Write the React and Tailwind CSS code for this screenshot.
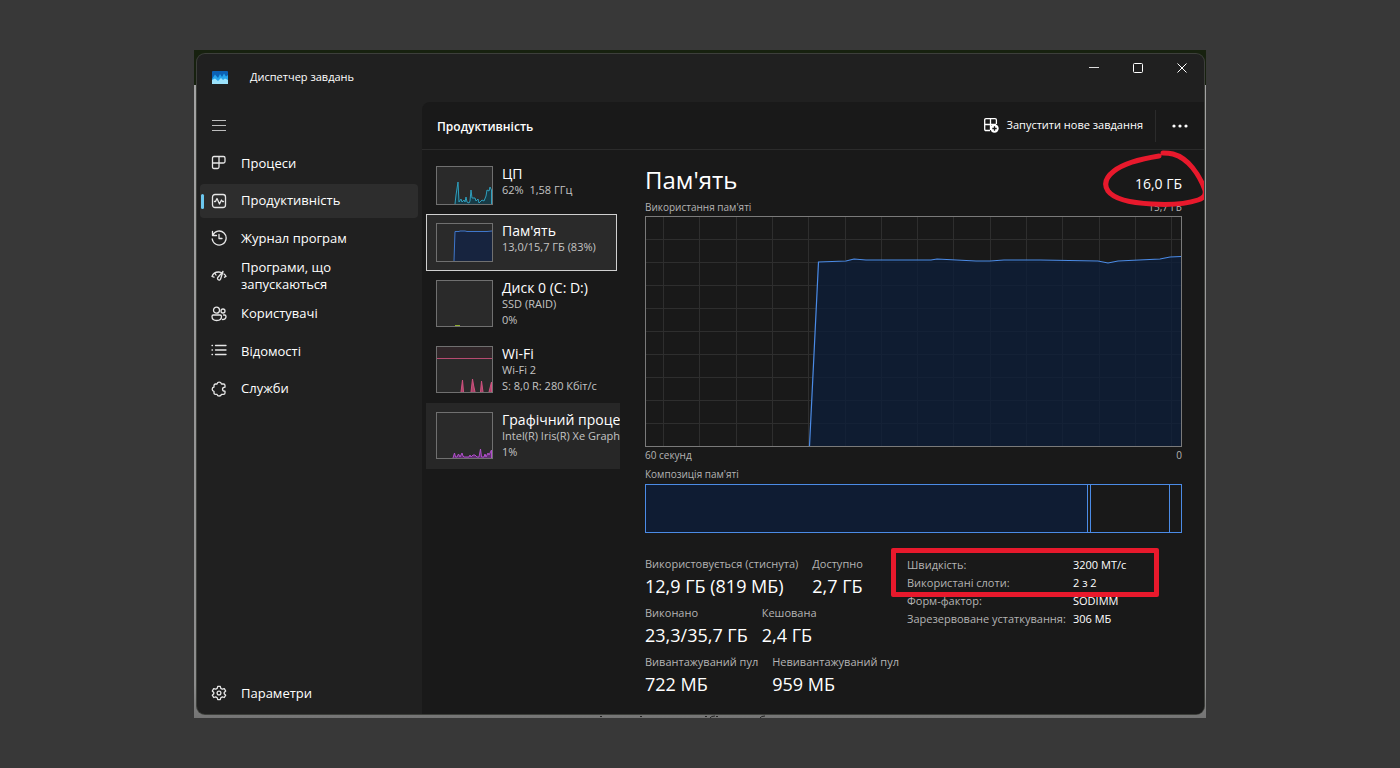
import React from 'react';

const NAV_ITEMS = [
  { id: 'processes', label: 'Процеси', icon: ProcessesIcon },
  { id: 'performance', label: 'Продуктивність', icon: PerformanceIcon },
  { id: 'history', label: 'Журнал програм', icon: HistoryIcon },
  { id: 'startup', label: 'Програми, що запускаються', icon: StartupIcon },
  { id: 'users', label: 'Користувачі', icon: UsersIcon },
  { id: 'details', label: 'Відомості', icon: DetailsIcon },
  { id: 'services', label: 'Служби', icon: ServicesIcon },
];

const RESOURCES = [
  { id: 'cpu', title: 'ЦП', lines: ['62%  1,58 ГГц'], chart: CpuThumb },
  { id: 'memory', title: "Пам'ять", lines: ['13,0/15,7 ГБ (83%)'], chart: MemoryThumb },
  { id: 'disk', title: 'Диск 0 (C: D:)', lines: ['SSD (RAID)', '0%'], chart: DiskThumb },
  { id: 'wifi', title: 'Wi-Fi', lines: ['Wi-Fi 2', 'S: 8,0 R: 280 Кбіт/с'], chart: WifiThumb },
  { id: 'gpu', title: 'Графічний процесор', lines: ['Intel(R) Iris(R) Xe Graphics', '1%'], chart: GpuThumb },
];

const STATS = [
  [['Використовується (стиснута)', '12,9 ГБ (819 МБ)'], ['Доступно', '2,7 ГБ']],
  [['Виконано', '23,3/35,7 ГБ'], ['Кешована', '2,4 ГБ']],
  [['Вивантажуваний пул', '722 МБ'], ['Невивантажуваний пул', '959 МБ']],
];

const HARDWARE = [
  ['Швидкість:', '3200 МТ/с'],
  ['Використані слоти:', '2 з 2'],
  ['Форм-фактор:', 'SODIMM'],
  ['Зарезервоване устаткування:', '306 МБ'],
];

export default function App() {
  return (
    <div className="min-h-screen bg-[#383838] py-[50px] font-['Open_Sans','Noto_Sans',sans-serif] text-white">
      {/* Desktop behind the window */}
      <div className="relative mx-auto w-full max-w-[1012px] overflow-hidden bg-[linear-gradient(#17210f_35px,#a3a3a3_35px,#8c8c8c_95%,#747474)] pt-1 pr-0.5 pb-1 pl-[3px]">
        <Window />
        <svg className="absolute bottom-0 left-[406px] h-[3px] w-[170px]" viewBox="0 0 170 3" fill="none" stroke="#222">
          <path d="M0 1.5h2M40 1.5h2M105 1.5h2M110 3Q111 1 115 1M116 1.5h2M160 3Q161 1 165 1" />
        </svg>
      </div>
    </div>
  );
}

function Window() {
  return (
    <div className="relative flex flex-col overflow-hidden rounded-lg bg-[#202020] ring-1 ring-[#3d3f3b]">
      <TitleBar />
      <div className="flex">
        <Sidebar />
        <main className="min-w-0 flex-1 rounded-tl-lg bg-[#191919]">
          <header className="flex h-12 items-center border-b border-[#2b2b2b] pl-[15px]">
            <h1 className="flex-1 pt-0.5 text-xs font-semibold">Продуктивність</h1>
            <button className="flex items-center gap-2 text-[11px]">
              <NewTaskIcon />
              Запустити нове завдання
            </button>
            <span className="ml-3 h-8 w-px bg-[#2b2b2b]"></span>
            <button aria-label="Більше" className="flex h-8 w-12 items-center justify-center">
              <svg width="16" height="4" viewBox="0 0 16 4" fill="#fff">
                <circle cx="2" cy="2" r="1.6" /><circle cx="8" cy="2" r="1.6" /><circle cx="14" cy="2" r="1.6" />
              </svg>
            </button>
          </header>
          <div className="flex">
            <ResourceList />
            <MemoryPanel />
          </div>
        </main>
      </div>
    </div>
  );
}

function TitleBar() {
  return (
    <div className="flex h-12 items-start">
      <div className="flex flex-1 items-center gap-[22px] pt-[11px] pl-[15px]">
        <AppLogo />
        <span className="text-[11px] leading-6">Диспетчер завдань</span>
      </div>
      <button aria-label="Згорнути" className="flex h-7 w-11 items-center justify-center">
        <svg width="10" height="10" viewBox="0 0 10 10" stroke="#ddd"><path d="M0 4.5h10" /></svg>
      </button>
      <button aria-label="Розгорнути" className="flex h-7 w-11 items-center justify-center">
        <svg width="10" height="10" viewBox="0 0 10 10" fill="none" stroke="#fff"><rect x="0.5" y="0.5" width="9" height="9" rx="1" /></svg>
      </button>
      <button aria-label="Закрити" className="flex h-7 w-11 items-center justify-center">
        <svg width="10" height="10" viewBox="0 0 10 10" stroke="#fff"><path d="M0.5 0.5l9 9M9.5 0.5l-9 9" /></svg>
      </button>
    </div>
  );
}

function Sidebar() {
  return (
    <aside className="flex w-[225px] shrink-0 flex-col pr-1 pl-[3px]">
      <button aria-label="Меню" className="mt-[3px] mb-px flex h-10 w-10 items-center pl-3">
        <svg width="14" height="11" viewBox="0 0 14 11" stroke="#bdbdbd"><path d="M0 0.5h14M0 5.5h14M0 10.5h14" /></svg>
      </button>
      <nav className="flex h-[260px] flex-col gap-[3px]">
        {NAV_ITEMS.map(({ id, label, icon: Icon }) => (
          <NavItem key={id} label={label} active={id === 'performance'}><Icon /></NavItem>
        ))}
      </nav>
      <div className="mt-auto mb-1 flex h-[34px]">
        <NavItem label="Параметри"><SettingsIcon /></NavItem>
      </div>
    </aside>
  );
}

function NavItem({ label, active, children }) {
  return (
    <a href="#" className={`relative flex min-h-0 flex-1 items-center gap-3.5 rounded pl-[11px] text-[13px] leading-[17px] ${active ? 'bg-[#2d2d2d]' : ''}`}>
      {active && <span className="absolute top-[10px] left-px h-[15px] w-[3px] rounded-full bg-[#6cc8f0]"></span>}
      {children}
      <span className="w-[120px]">{label}</span>
    </a>
  );
}

function ResourceList() {
  return (
    <div className="w-[198px] shrink-0 pt-[7px] pl-1">
      {RESOURCES.map(({ id, title, lines, chart: Chart }) => (
        <button
          key={id}
          className={`flex gap-[9px] overflow-hidden py-[9px] pl-[10px] text-left ${id === 'memory' ? 'w-[191px] bg-[#2a2a2a] outline-1 -outline-offset-1 outline-[#d0d0d0]' : 'w-full'} ${id === 'gpu' ? 'bg-[#272727]' : ''}`}
        >
          <span className={`w-[57px] shrink-0 border border-[#707070] bg-[#2a2a2a] ${lines.length > 1 ? 'h-[47px]' : 'h-[39px]'}`}>
            <Chart />
          </span>
          <span className="min-w-0 whitespace-pre">
            <span className="block text-sm leading-4">{title}</span>
            {lines.map(line => (
              <span key={line} className="block text-[11px] leading-4 text-[#c4c4c4]">{line}</span>
            ))}
          </span>
        </button>
      ))}
    </div>
  );
}

function MemoryPanel() {
  return (
    <section className="relative min-w-0 flex-1 pt-3 pr-[22px] pb-[11px] pl-[25px]">
      <div className="flex h-9 items-center justify-between">
        <h2 className="text-2xl leading-9">Пам'ять</h2>
        <span className="pt-2 text-sm">16,0 ГБ</span>
      </div>
      <div className="mt-px flex h-4 items-center justify-between text-[10px] leading-4 text-[#b4b4b4]">
        <span>Використання пам'яті</span>
        <span>15,7 ГБ</span>
      </div>
      <MemoryChart />
      <div className="flex justify-between text-[10px] leading-4 text-[#b4b4b4]">
        <span>60 секунд</span>
        <span>0</span>
      </div>
      <div className="mt-[3px] text-[10px] leading-4 text-[#b4b4b4]">Композиція пам'яті</div>
      <div className="mt-0.5 flex h-[49px] border border-[#4b8be6]">
        <div className="flex-1 bg-[#0f1c33]"></div>
        <div className="w-1 border-x border-[#4b8be6]"></div>
        <div className="w-[79px] border-r border-[#4b8be6]"></div>
        <div className="w-[11px]"></div>
      </div>

      <div className="mt-[23px] flex">
        <div className="w-[262px] shrink-0">
          {STATS.map((row, i) => (
            <dl key={i} className="flex h-[49px] gap-3.5 whitespace-nowrap">
              {row.map(([label, value]) => (
                <div key={label}>
                  <dt className="text-[11px] leading-4 text-[#b4b4b4]">{label}</dt>
                  <dd className="text-lg leading-7">{value}</dd>
                </div>
              ))}
            </dl>
          ))}
        </div>
        <div className="relative self-start">
          <table className="text-[11px] leading-[18px]">
            <tbody>
              {HARDWARE.map(([label, value]) => (
                <tr key={label}>
                  <th scope="row" className="w-[166px] p-0 text-left font-normal whitespace-nowrap text-[#b4b4b4]">{label}</th>
                  <td className="p-0 whitespace-nowrap">{value}</td>
                </tr>
              ))}
            </tbody>
          </table>
          <span className="absolute -top-2 -left-4 h-[49px] w-[268px] rounded-xs border-5 border-[#e8192c]"></span>
        </div>
      </div>

      {/* Red marker ring round the total */}
      <svg className="absolute top-0 -right-1 h-[60px] w-[106px]" viewBox="0 0 106 60" fill="none" stroke="#e8192c" strokeWidth="5" strokeLinecap="round">
        <path d="M57 6C38 9 21 14 12 21C3 28 2 35 6 41C12 49 30 53 50 54C67 55 84 54 96 50C102 48 104 45 103 40C97 24 86 8 71 4C67 3 64 3 61 3" />
      </svg>
    </section>
  );
}

function MemoryChart() {
  return (
    <svg className="mt-px block h-[231px] w-full border border-[#7a7a7a]" viewBox="0 0 535 229" preserveAspectRatio="none" fill="none">
      <g stroke="#2e2e2e">
        {[...Array(15)].map((_, i) => <path key={i} d={`M${Math.round(18 + i * 36.3) - 0.5} 0V229`} />)}
        {[...Array(9)].map((_, i) => <path key={i} d={`M0 ${(i + 1) * 23 - 0.5}H535`} />)}
      </g>
      <path d="M163.5 229L172.5 45L200 44L208 42L220 43L285 43L291 42L330 44L344 44L358 43L394 43L452 44L462 46L472 44L514 42L524 40L535 39.5V229Z" fill="#0c1d3a" fillOpacity="0.75" />
      <path d="M163.5 229L172.5 45L200 44L208 42L220 43L285 43L291 42L330 44L344 44L358 43L394 43L452 44L462 46L472 44L514 42L524 40L535 39.5" stroke="#4b8be6" strokeWidth="1.2" vectorEffect="non-scaling-stroke" />
    </svg>
  );
}

function CpuThumb() {
  return (
    <svg width="55" height="37" viewBox="0 0 55 37" fill="#173a45" stroke="#2f9fbd">
      <path d="M18 37L19 28L21 15L22 35L24 32L25 35L27 33L28 35L29 30L30 35L32 36L33 34L34 23L35 31L38 31L39 34L41 32L42 36L45 33L47 34L49 29L50 23L52 24L53 20L54.5 23V37" />
    </svg>
  );
}

function MemoryThumb() {
  return (
    <svg width="55" height="37" viewBox="0 0 55 37">
      <path d="M17 37L18 7.5H22L23 7H28L30 7.5H50L55 7V37Z" fill="#17243f" />
      <path d="M17 37L18 7.5H22L23 7H28L30 7.5H50L55 7" fill="none" stroke="#3f77cc" />
    </svg>
  );
}

function DiskThumb() {
  return (
    <svg width="55" height="45" viewBox="0 0 55 45">
      <path d="M18 44.5h5" stroke="#8fae2f" />
    </svg>
  );
}

function WifiThumb() {
  return (
    <svg width="55" height="45" viewBox="0 0 55 45" fill="#a84468" stroke="#cf527f">
      <rect width="55" height="11" fill="#302629" stroke="none" />
      <path d="M0 11.5h55" stroke="#b84a70" />
      <path d="M24 45L25.5 33L26.5 45M34 45L35.5 32L36.5 38L38 45M43.5 45L44.5 34L46 45M52 45L54.5 35V45" />
    </svg>
  );
}

function GpuThumb() {
  return (
    <svg width="55" height="45" viewBox="0 0 55 45" fill="#5f2f6e" stroke="#b04fcb">
      <path d="M16 45L17.5 40L18.5 44L20 44L21.5 41L23 44L25 40L26 43L27 44H32L33 42L34 44L36 42H38L40 44H42L43.5 36L44.5 44L47 44L48 41L49 44L51 40L52 42L54.5 37V45" />
    </svg>
  );
}

function AppLogo() {
  return (
    <svg width="16" height="13" viewBox="0 0 16 13">
      <rect width="16" height="13" rx="1" fill="#0c61b4" />
      <path d="M0 8L3 3.5L6 7L8 3L10 6L12 2.5L14 5.5L16 4V13H0Z" fill="#27a5ec" />
      <path d="M0 9L3 7.5L6 10L9 7L11 9L13 7.5L16 9V13H0Z" fill="#9be2fb" />
    </svg>
  );
}

function Icon({ children }) {
  return (
    <svg className="shrink-0" width="16" height="16" viewBox="0 0 16 16" fill="none" stroke="#e6e6e6" strokeWidth="1.3" strokeLinecap="round" strokeLinejoin="round">
      {children}
    </svg>
  );
}

function ProcessesIcon() {
  return (
    <Icon>
      <path d="M3 1.5H12.5Q14 1.5 14 3V6.500Q14 8 12.500 8H8V12Q8 13.500 6.500 13.500H3Q1.500 13.500 1.500 12V3Q1.500 1.500 3 1.500ZM1.500 8H8V1.500" />
    </Icon>
  );
}

function PerformanceIcon() {
  return (
    <Icon>
      <rect x="1.5" y="1.5" width="13" height="13" rx="2.5" />
      <path d="M3.5 8.500H4.500L6 5.500L8.500 11L10.500 7L11.500 8.500H12.500" />
    </Icon>
  );
}

function HistoryIcon() {
  return (
    <Icon>
      <path d="M1.500 1.500V5.500H5.500M1.800 5A7 7 0 1 1 1.200 9M8 4.500V8.500H11" />
    </Icon>
  );
}

function StartupIcon() {
  return (
    <Icon>
      <path d="M1 8.500Q2.500 4 7.500 4Q9 4 10 4.500M13 6Q14.500 7 15 8.500M1 8.500L3 9.200M15 8.500L13.500 9.200M12 3.500L6.800 9.500A1.600 1.600 0 1 0 9.500 11.200L12 3.500M4 5.500L5 7" />
    </Icon>
  );
}

function UsersIcon() {
  return (
    <Icon>
      <circle cx="5.500" cy="4.200" r="3" />
      <circle cx="12" cy="5" r="2" />
      <path d="M2.200 9H9Q10.500 9 10.500 10.500Q10.500 14.500 5.700 14.500Q1 14.500 1 10.500Q1 9 2.200 9ZM12.500 9H13.500Q15 9 15 10.500Q15 13.500 11.500 13.500" />
    </Icon>
  );
}

function DetailsIcon() {
  return (
    <Icon>
      <path d="M4.500 2.500H15M4.500 7H15M4.500 11.500H15M1 2.500H1.500M1 7H1.500M1 11.500H1.500" />
    </Icon>
  );
}

function ServicesIcon() {
  return (
    <Icon>
      <path d="M6 3Q6.500 1.200 8.200 1.200T10.500 3H12.500Q14 3 14 4.500V6.200Q11.500 6.300 11.500 8.200T14 10.200V12Q14 13.300 12.500 13.300H10.500Q10 15 8.200 15T6 13.300H4.500Q3 13.300 3 12V10.300Q1.200 10 1.200 8.200T3 6V4.500Q3 3 4.500 3Z" />
    </Icon>
  );
}

function SettingsIcon() {
  return (
    <Icon>
      <path d="M6.700 1.300H9.300L9.800 3.400L11.300 4.200L13.300 3.600L14.700 6L13.200 7.500V8.800L14.700 10.200L13.300 12.500L11.300 11.900L9.800 12.700L9.300 14.700H6.700L6.200 12.700L4.700 11.900L2.700 12.500L1.300 10.200L2.800 8.800V7.500L1.300 6L2.700 3.600L4.700 4.200L6.200 3.400Z" />
      <circle cx="8" cy="8" r="1.900" />
    </Icon>
  );
}

function NewTaskIcon() {
  return (
    <svg width="15" height="15" viewBox="0 0 15 15" fill="none" stroke="#fff" strokeWidth="1.3">
      <path d="M6 12.500H2Q0.700 12.500 0.700 11.200V2Q0.700 0.700 2 0.700H11Q12.400 0.700 12.400 2V6M6.500 0.700V12M0.700 6.500H12" />
      <circle cx="10.500" cy="10.500" r="4.200" fill="#fff" stroke="none" />
      <path d="M10.500 8.300V12.700M8.300 10.500H12.700" stroke="#191919" />
    </svg>
  );
}
